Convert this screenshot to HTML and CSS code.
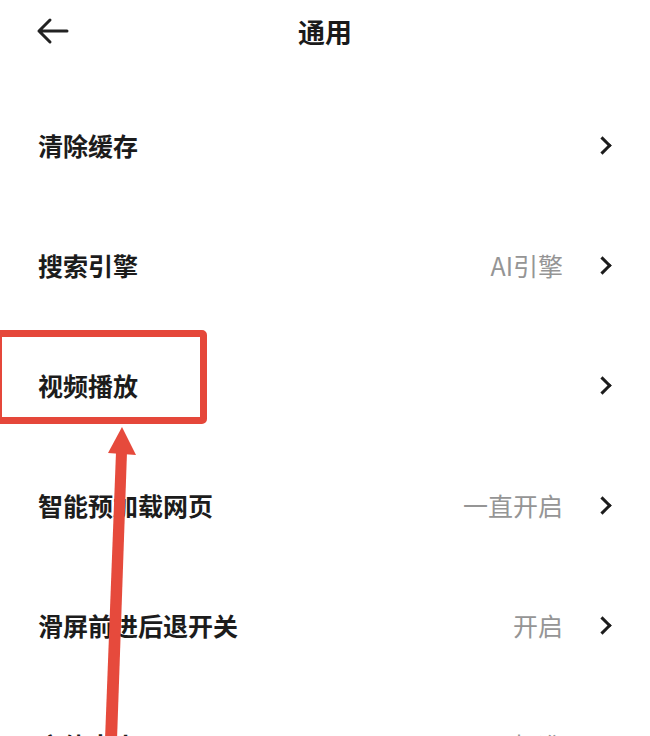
FILE: index.html
```html
<!DOCTYPE html>
<html lang="zh-CN">
<head>
    <meta charset="UTF-8">
    <meta name="viewport" content="width=device-width, initial-scale=1.0">
    <title>通用</title>
    <link rel="stylesheet" href="styles.css">
</head>
<body>
    <div class="page">
        <!-- header -->
        <div class="header">
            <button class="back" aria-label="返回">
                <svg width="34" height="28" viewBox="0 0 34 28">
                    <path d="M32 14 H4 M15 3 L4 14 L15 25" fill="none" stroke="#222" stroke-width="3" stroke-linecap="round" stroke-linejoin="round"/>
                </svg>
            </button>
            <h1 class="title">通用</h1>
        </div>

        <!-- settings list -->
        <div class="list">
            <div class="row">
                <span class="label">清除缓存</span>
                <span class="right"><span class="chevron"></span></span>
            </div>
            <div class="row">
                <span class="label">搜索引擎</span>
                <span class="right"><span class="value">AI引擎</span><span class="chevron"></span></span>
            </div>
            <div class="row">
                <span class="label">视频播放</span>
                <span class="right"><span class="chevron"></span></span>
            </div>
            <div class="row">
                <span class="label">智能预加载网页</span>
                <span class="right"><span class="value">一直开启</span><span class="chevron"></span></span>
            </div>
            <div class="row">
                <span class="label">滑屏前进后退开关</span>
                <span class="right"><span class="value">开启</span><span class="chevron"></span></span>
            </div>
            <div class="row">
                <span class="label">字体大小</span>
                <span class="right"><span class="value">标准</span><span class="chevron"></span></span>
            </div>
        </div>

        <!-- annotation: highlight box + arrow -->
        <div class="highlight"></div>
        <svg class="pointer" width="650" height="736" viewBox="0 0 650 736">
            <polygon points="122,427 136,455 108,453" fill="#e64a3c"/>
            <polygon points="116,452 127,452 117,740 105,740" fill="#e64a3c"/>
        </svg>
    </div>
</body>
</html>
```

FILE: styles.css
```css
body {
    margin: 0;
    background: #fff;
    font-family: "Noto Sans CJK SC", "Noto Sans", sans-serif;
    color: #1c1c1c;
    overflow: hidden;
}

.page {
    position: relative;
    width: 650px;
    height: 736px;
    overflow: hidden;
}

.header {
    position: relative;
    height: 62px;
    display: flex;
    align-items: center;
    justify-content: center;
}

.back {
    position: absolute;
    left: 35px;
    top: 17px;
    padding: 0;
    border: none;
    background: none;
}

.title {
    margin: 0;
    font-size: 27px;
    font-weight: 700;
    line-height: 1;
    color: #1a1a1a;
}

.list {
    padding-top: 23px;
}

.row {
    height: 120px;
    padding: 0 36px 0 38px;
    display: flex;
    align-items: center;
    justify-content: space-between;
}

.label {
    font-size: 25px;
    font-weight: 600;
    line-height: 1;
}

.right {
    display: flex;
    align-items: center;
}

.value {
    font-size: 25px;
    color: #959595;
    line-height: 1;
    margin-right: 33px;
}

/* chevron: a rotated corner */
.chevron {
    width: 10px;
    height: 10px;
    border-top: 3px solid #1c1c1c;
    border-right: 3px solid #1c1c1c;
    transform: rotate(45deg);
    margin-right: 5px;
}

.highlight {
    position: absolute;
    left: -5px;
    top: 330px;
    width: 198px;
    height: 80px;
    border: 7px solid #e5473a;
    border-radius: 5px;
}

.pointer {
    position: absolute;
    left: 0;
    top: 0;
}
```
